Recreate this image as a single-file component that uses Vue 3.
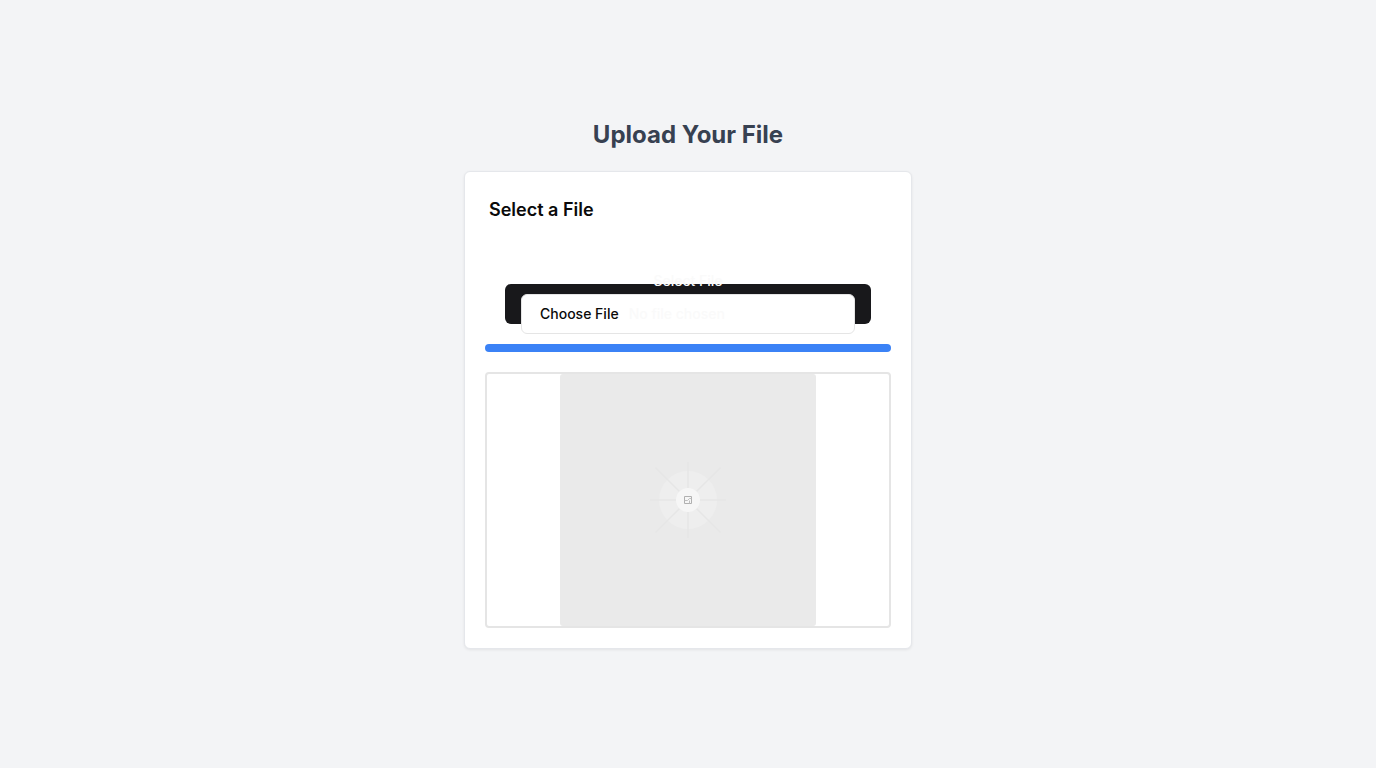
<script setup>
import { ref } from 'vue'

const progress = ref(100)
const rays = [0, 45, 90, 135, 180, 225, 270, 315]
</script>

<template>
  <main class="page">
    <h1 class="heading">Upload Your File</h1>
    <section class="card">
      <h2 class="card-title">Select a File</h2>
      <div class="content">
        <label class="picker" for="file">
          <span>Select File</span>
          <input id="file" class="file" type="file" />
        </label>
        <div class="track" role="progressbar" aria-label="Upload progress" :aria-valuenow="progress">
          <div class="bar" :style="{ width: progress + '%' }"></div>
        </div>
        <div class="preview">
          <svg class="placeholder" viewBox="0 0 256 256" role="img" aria-label="File preview">
            <rect y="2" width="256" height="252" rx="3" fill="#eaeaea" />
            <circle cx="128" cy="128" r="29" fill="#eeeeee" />
            <g stroke="#e6e6e6" stroke-width="1.5">
              <line v-for="r in rays" :key="r" x1="140" y1="128" :x2="r % 90 ? 174 : 166" y2="128" :transform="`rotate(${r} 128 128)`" />
            </g>
            <circle cx="128" cy="128" r="12" fill="#f6f6f6" />
            <g fill="none" stroke="#b0b0b0" stroke-width="1">
              <path d="M124.5 124.5h7v7h-7z" />
              <path d="M124.5 128.5h3l2-2h2M129.5 128.5v3" stroke="#bebebe" />
            </g>
          </svg>
        </div>
      </div>
    </section>
  </main>
</template>

<style>
body {
  background: #f3f4f6;
}
</style>

<style scoped>
.page {
  min-height: 100vh;
  display: flex;
  flex-direction: column;
  align-items: center;
  justify-content: center;
  gap: 20px;
  font-family: Inter, "Liberation Sans", sans-serif;
  color: #0a0a0a;
}
.heading {
  margin: 0;
  font-size: 24px;
  line-height: 32px;
  font-weight: 700;
  color: #374151;
}
.card {
  box-sizing: border-box;
  width: 100%;
  max-width: 448px;
  border: 1px solid #e5e7eb;
  border-radius: 6px;
  background: #fff;
  box-shadow: 0 1px 3px rgba(0, 0, 0, 0.07);
}
.card-title {
  margin: 0;
  padding: 24px;
  font-size: 18px;
  line-height: 28px;
  font-weight: 600;
}
.content {
  display: flex;
  flex-direction: column;
  gap: 20px;
  padding: 36px 20px 20px;
}
.picker {
  box-sizing: border-box;
  display: flex;
  flex-direction: column;
  align-items: center;
  justify-content: center;
  height: 40px;
  margin: 0 20px;
  padding: 0 16px;
  border-radius: 6px;
  background: #18181b;
  color: #fafafa;
  font-size: 14px;
  line-height: 20px;
  font-weight: 500;
  cursor: pointer;
}
.file {
  box-sizing: border-box;
  flex: none;
  width: 100%;
  height: 40px;
  margin: 3px 0;
  padding: 9px 12px 7px;
  border: 1px solid #e5e5e5;
  border-radius: 6px;
  background: #fff;
  color: inherit;
  font: inherit;
}
.file::file-selector-button {
  padding: 0 6px;
  border: 0;
  background: transparent;
  color: #0a0a0a;
  font: inherit;
}
.track {
  height: 8px;
  border-radius: 4px;
  overflow: hidden;
  background: #e5e7eb;
}
.bar {
  height: 100%;
  background: #3b82f6;
}
.preview {
  box-sizing: border-box;
  display: flex;
  align-items: center;
  justify-content: center;
  height: 256px;
  border: 2px solid #e5e5e5;
  border-radius: 4px;
}
.placeholder {
  flex: none;
  width: 256px;
  height: 256px;
}
</style>
